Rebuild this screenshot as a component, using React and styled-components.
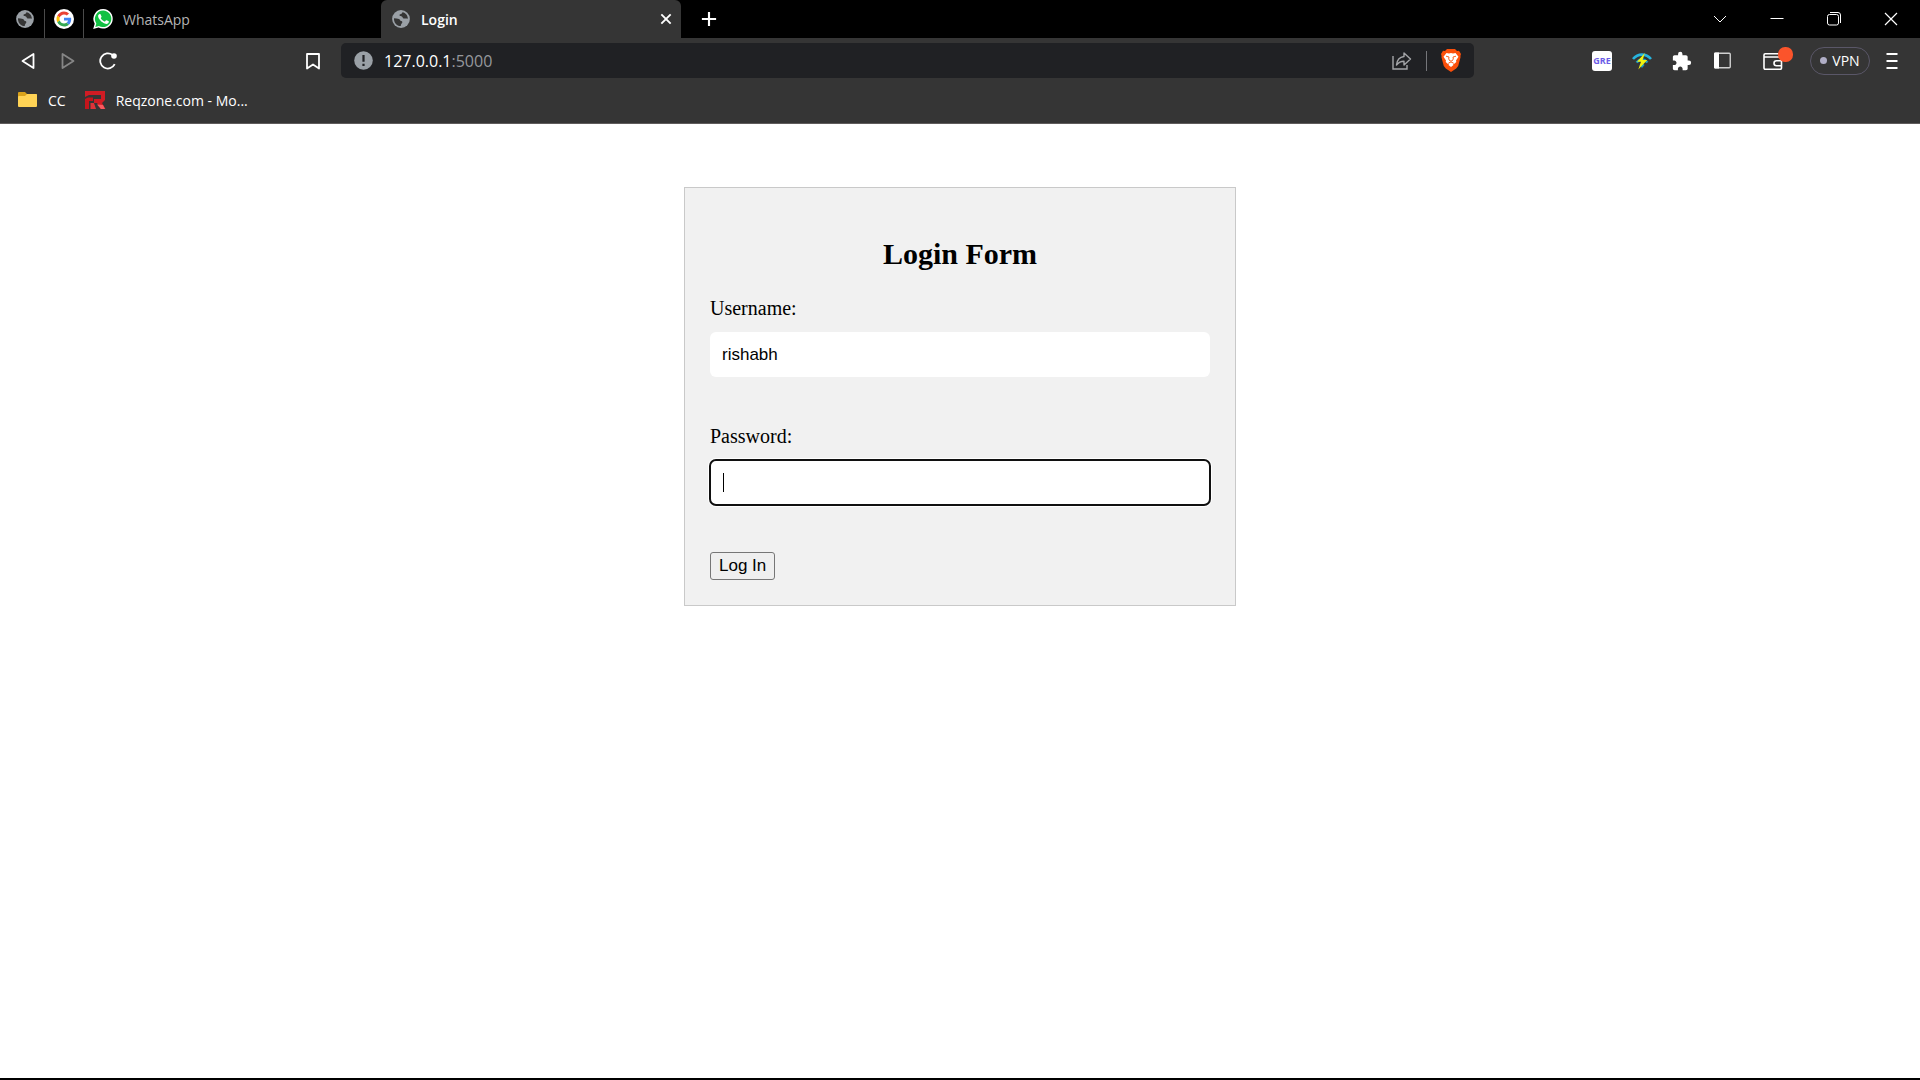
import React from "react";
import styled, { createGlobalStyle, css } from "styled-components";

const UI_FONT = '"Open Sans", "Noto Sans", sans-serif';

const GlobalStyle = createGlobalStyle`
  *, *::before, *::after { box-sizing: border-box; }
  body { margin: 0; background: #fff; }
`;

const Window = styled.div`
  display: flex;
  flex-direction: column;
  min-height: 100vh;
  border-bottom: 2px solid #000;
`;

const Chrome = styled.header`
  background: #353535;
  border-bottom: 1px solid #5f5c5c;
  font-family: ${UI_FONT};
  font-size: 14px;
  color: #fff;
`;

const iconReset = css`
  display: inline-flex;
  align-items: center;
  justify-content: center;
  padding: 0;
  border: 0;
  background: none;
  color: inherit;
  font: inherit;
`;

const TabStrip = styled.div`
  display: flex;
  height: 38px;
  background: #000;
`;

const PinnedTab = styled.button`
  ${iconReset}
  width: ${(p) => p.$width}px;
  padding-left: ${(p) => p.$inset}px;
  justify-content: flex-start;
`;

const TabDivider = styled.span`
  width: 1px;
  margin-top: 9px;
  background: #4a4a4a;
`;

const Tab = styled.div`
  display: flex;
  align-items: center;
  flex: 0 1 ${(p) => (p.$active ? 300 : 297)}px;
  padding: 0 6px 0 ${(p) => (p.$active ? 11 : 9)}px;
  border-radius: 6px 6px 0 0;
  background: ${(p) => (p.$active ? "#353535" : "transparent")};
  color: ${(p) => (p.$active ? "#fff" : "#b4b4b4")};
  font-weight: ${(p) => (p.$active ? 600 : 400)};
`;

const TabTitle = styled.button`
  ${iconReset}
  flex: 1;
  justify-content: flex-start;
  gap: ${(p) => (p.$wide ? 11 : 10)}px;
`;

const TabClose = styled.button`
  ${iconReset}
  width: 18px;
  height: 18px;
`;

const NewTab = styled.button`
  ${iconReset}
  width: 56px;
`;

const WindowControls = styled.div`
  display: flex;
  margin-left: auto;
  padding-right: 1px;
`;

const WindowButton = styled.button`
  ${iconReset}
  width: 57px;
`;

const Toolbar = styled.div`
  display: grid;
  grid-template-columns: 341px minmax(0, 1fr) 446px;
  align-items: center;
  height: 45px;
`;

const Navigation = styled.nav`
  display: flex;
  padding: 0 8px;
`;

const NavButton = styled.button`
  ${iconReset}
  width: 40px;
  height: 36px;
  color: ${(p) => (p.disabled ? "#868686" : "#fff")};
  margin-left: ${(p) => (p.$end ? "auto" : 0)};
`;

const AddressBar = styled.div`
  display: flex;
  align-items: center;
  height: 35px;
  padding: 0 13px;
  border-radius: 5px;
  background: #202124;
`;

const Address = styled.button`
  ${iconReset}
  flex: 1;
  justify-content: flex-start;
  gap: 11px;
  font-size: 16px;
`;

const Port = styled.span`
  color: #96989c;
`;

const AddressActions = styled.div`
  display: flex;
  align-items: center;
  gap: 14px;
`;

const ActionDivider = styled.span`
  width: 1px;
  height: 20px;
  background: #75767a;
`;

const ActionButton = styled.button`
  ${iconReset}
`;

const Extensions = styled.div`
  display: flex;
  align-items: center;
  justify-content: flex-end;
  padding-right: 8px;
`;

const ExtensionButton = styled.button`
  ${iconReset}
  width: 40px;
  height: 36px;
`;

const GreBadge = styled.span`
  width: 20px;
  border-radius: 3px;
  background: #fff;
  color: #6c5ce7;
  font-size: 9px;
  font-weight: 700;
  line-height: 20px;
  text-align: center;
`;

const WalletButton = styled(ExtensionButton)`
  position: relative;
  margin: 0 17px 0 11px;
`;

const WalletAlert = styled.span`
  position: absolute;
  top: 4px;
  right: 0;
  width: 15px;
  height: 15px;
  border-radius: 7px;
  background: #fb542b;
`;

const VpnButton = styled.button`
  ${iconReset}
  gap: 5px;
  width: 60px;
  height: 28px;
  margin-right: 2px;
  border: 1px solid #5a5768;
  border-radius: 14px;
`;

const VpnDot = styled.span`
  width: 7px;
  height: 7px;
  border-radius: 50%;
  background: #b0aec6;
`;

const Bookmarks = styled.nav`
  display: flex;
  align-items: flex-start;
  gap: 19px;
  height: 40px;
  padding: 6px 18px;
`;

const Bookmark = styled.a`
  display: flex;
  align-items: center;
  gap: 10px;
  height: 22px;
  color: #fff;
  text-decoration: none;
`;

const Page = styled.main`
  flex: 1;
  padding: 63px 20px;
  font-family: "Liberation Serif", serif;
  font-size: 20px;
  color: #000;
`;

const LoginForm = styled.form`
  max-width: 552px;
  margin: 0 auto;
  padding: 25px;
  border: 1px solid #c9c9c9;
  background: #f1f1f1;
`;

const Title = styled.h2`
  margin: 24px 0 26px;
  font-size: 30px;
  line-height: 33px;
  text-align: center;
`;

const Field = styled.div`
  margin-bottom: 47px;
`;

const Label = styled.label`
  display: block;
  margin-bottom: 12px;
  line-height: 24px;
`;

const InputWrap = styled.div`
  position: relative;
`;

const controlFont = css`
  font-family: "Liberation Sans", sans-serif;
  font-size: 17px;
`;

const Input = styled.input`
  ${controlFont}
  display: block;
  width: 100%;
  height: 45px;
  padding: 0 12px;
  border: 0;
  border-radius: 6px;
  background: #fff;
  color: #000;
  outline: ${(p) => (p.$focused ? "2px solid #101010" : "none")};
  outline-offset: -1px;
  box-shadow: ${(p) => (p.$focused ? "0 0 0 2px #fff" : "none")};
`;

const Caret = styled.span`
  position: absolute;
  top: 13px;
  left: 13px;
  width: 1px;
  height: 19px;
  background: #000;
`;

const Submit = styled.button`
  ${controlFont}
  display: block;
  height: 28px;
  padding: 0 8px;
  border: 1px solid #767676;
  border-radius: 3px;
  background: #efefef;
  color: #000;
`;

const Globe = () => (
  <svg width="18" height="18" viewBox="0 0 18 18">
    <circle cx="9" cy="9" r="8.9" fill="#9aa0a6" />
    <path d="M2 8.2c1.800 0 3.500.2 5 .8 1.200.5.8 1.800 2.200 2.100 1.300.3 1.500 1.300.7 2.200-.7.8-1.100 1.300-1.100 2.700C5 16.200 1.600 12.800 2 8.200Z" fill="#353535" />
    <path d="M10.600 2.200c-.8.600-.5 1.600-1.600 1.800-1.300.2-1.700.7-1.400 1.600.3.900 1.500.5 2.300.9.900.5.6 1.800 1.900 2 1.500.2 2.600-.3 4.100.3C15.800 5.300 13.600 2.700 10.600 2.200Z" fill="#353535" />
  </svg>
);

const Google = () => (
  <svg width="20" height="20" viewBox="0 0 20 20">
    <circle cx="10" cy="10" r="10" fill="#fff" />
    <g transform="translate(2.500 2.500) scale(.3125)">
      <path fill="#EA4335" d="M24 9.500c3.540 0 6.710 1.220 9.210 3.600l6.850-6.850C35.900 2.380 30.470 0 24 0 14.620 0 6.510 5.380 2.560 13.220l7.980 6.190C12.430 13.720 17.740 9.500 24 9.500z" />
      <path fill="#4285F4" d="M46.980 24.550c0-1.570-.15-3.090-.38-4.550H24v9.020h12.940c-.58 2.960-2.260 5.480-4.780 7.180l7.730 6c4.510-4.180 7.090-10.360 7.090-17.650z" />
      <path fill="#FBBC05" d="M10.530 28.590c-.48-1.450-.76-2.990-.76-4.590s.27-3.140.76-4.590l-7.980-6.190C.92 16.460 0 20.120 0 24c0 3.880.92 7.540 2.560 10.780l7.970-6.190z" />
      <path fill="#34A853" d="M24 48c6.480 0 11.930-2.130 15.890-5.810l-7.730-6c-2.150 1.450-4.920 2.300-8.160 2.300-6.260 0-11.570-4.220-13.470-9.910l-7.980 6.190C6.510 42.620 14.620 48 24 48z" />
    </g>
  </svg>
);

const WhatsApp = () => (
  <svg width="20" height="20" viewBox="0 0 20 20">
    <path d="M10.200 0A9.800 9.800 0 0 0 1.700 14.700L.2 20l5.400-1.400A9.800 9.800 0 1 0 10.200 0Z" fill="#fff" />
    <path d="M10.200 1.500A8.300 8.300 0 0 0 3.300 14.400l-1 3.500 3.600-.9A8.300 8.300 0 1 0 10.200 1.500Z" fill="#12c143" />
    <path d="M7.500 5.300c-.2-.4-.4-.4-.7-.4-.9 0-1.700 1-1.700 2.200 0 1.400 1 2.800 1.200 3 .2.200 2.200 3.400 5.400 4.500 2.500.9 3.900-.1 4.100-1.500.1-.7-.1-.8-.4-1l-1.900-.9c-.3-.1-.5-.1-.7.200l-.8 1c-.2.200-.3.200-.6.100-1.800-.8-2.800-1.900-3.600-3.200-.1-.3 0-.4.200-.6l.5-.7c.1-.2.200-.3 0-.6Z" fill="#fff" />
  </svg>
);

const Reqzone = () => (
  <svg width="21" height="18" viewBox="0 0 21 18">
    <path d="M0 0h20v9l-3 3 3.500 6h-5L12 12H9V8h7V4H4L0 6Z" fill="#d01c24" />
    <path d="M0 8l3-1.500h5V10H4v8H0Z" fill="#c4151c" />
    <path d="M5.500 12H9l2 6H5.500Z" fill="#df3339" />
    <path d="m12 13.500 4 4.500h4l-2-4Z" fill="#f75a60" />
  </svg>
);

const Folder = () => (
  <svg width="20" height="16" viewBox="0 0 20 16">
    <path d="M1 0h6l2 2h9a1 1 0 0 1 1 1v11H0V1a1 1 0 0 1 1-1Z" fill="#d9a21b" />
    <path d="M1 4h6l2-2h9a1 1 0 0 1 1 1v11a1 1 0 0 1-1 1H1a1 1 0 0 1-1-1V5a1 1 0 0 1 1-1Z" fill="#ffd355" />
  </svg>
);

const Brave = () => (
  <svg width="20" height="23" viewBox="0 0 20 23">
    <path d="M6 0h8l2 2 2-.2L20 5l-.6 2 .2 1-2.400 9-2 2.500L10 23l-5.200-3.500-2-2.500L.4 8l.2-1L0 5l2-3.200L4 2Z" fill="#fb4f0a" />
    <path d="m5.500 4 2.500.5 2-.5 2 .5 2.500-.5 3 3.800-2.500 3.700.3 1.500-2.300 2-1.300-.8.800 1.800L10 18l-2.500-2 .8-1.800-1.300.8-2.300-2 .3-1.500L2.500 7.800Z" fill="#fff" />
    <path d="m5 7.200 3 .8-.3 2 1.300 2h2l1.300-2-.3-2 3-.8M7.500 14l2.500-1 2.500 1" fill="none" stroke="#fb4f0a" strokeWidth=".9" />
  </svg>
);

const Share = () => (
  <svg width="20" height="18" viewBox="0 0 20 18" fill="none" stroke="#a4a5a8" strokeWidth="1.400">
    <path d="M1 4v13h14v-4" />
    <path d="M12 1v3.500C7.500 5 5 8 4.500 13 6.500 10.500 8.500 9.300 12 9.300V13l6.500-6Z" strokeLinejoin="round" />
  </svg>
);

const WifiBolt = () => (
  <svg width="20" height="18" viewBox="0 0 20 18" fill="none">
    <path d="M1 7C6 1.200 14 1.200 19 7" stroke="#27b4de" strokeWidth="2.600" />
    <path d="M4.500 10.500C8 6.500 12 6.500 15.500 10.500" stroke="#1c9cc4" strokeWidth="2.400" />
    <path d="M7.500 13c2-2 3.500-2 5 0L10 16Z" fill="#1c9cc4" />
    <path d="M12.800 1 5 9.800h4L6.300 17.500 15.300 8h-4.600Z" fill="#f2f20d" />
  </svg>
);

const Puzzle = () => (
  <svg width="20" height="20" viewBox="1 0 23 23" fill="#fff">
    <path d="M20.500 11H19V7c0-1.100-.9-2-2-2h-4V3.500a2.500 2.500 0 0 0-5 0V5H4c-1.100 0-1.990.9-1.990 2v3.800H3.500c1.490 0 2.700 1.210 2.700 2.700s-1.210 2.700-2.700 2.700H2V20c0 1.100.9 2 2 2h3.800v-1.500c0-1.490 1.210-2.700 2.700-2.700 1.490 0 2.700 1.210 2.700 2.700V22H17c1.100 0 2-.9 2-2v-4h1.500a2.500 2.500 0 0 0 0-5z" />
  </svg>
);

const Sidebar = () => (
  <svg width="17" height="17" viewBox="0 0 17 17">
    <rect x=".75" y="1.250" width="15.500" height="14.500" rx="1" fill="none" stroke="#d0d0d0" strokeWidth="1.400" />
    <path d="M0 1.500Q0 .5 1 .5h4v16H1q-1 0-1-1Z" fill="#fff" />
  </svg>
);

const Wallet = () => (
  <svg width="20" height="18" viewBox="0 0 20 18" fill="none" stroke="#fff" strokeWidth="1.600">
    <path d="M18.500 6.500V16a1.200 1.200 0 0 1-1.200 1.200H2.200A1.200 1.200 0 0 1 1 16V3a1.200 1.200 0 0 1 1.200-1.200H17M1 5h16.500a1 1 0 0 1 1 1" />
    <path d="M18.500 8.800H13.500a2.500 2.500 0 0 0 0 5H18.500" />
  </svg>
);

const Stroke = ({ size = 18, d, width = 1.8 }) => (
  <svg width={size} height={size} viewBox="0 0 18 18" fill="none" stroke="currentColor" strokeWidth={width} strokeLinejoin="round">
    <path d={d} />
  </svg>
);

const Info = () => (
  <svg width="19" height="19" viewBox="0 0 19 19">
    <circle cx="9.500" cy="9.500" r="9.300" fill="#9aa0a6" />
    <path d="M9.500 4v6.800M9.500 12.800v2.200" stroke="#202124" strokeWidth="2.200" />
  </svg>
);

const Reload = () => (
  <svg width="18" height="18" viewBox="0 0 18 18" fill="none" stroke="#fff" strokeWidth="1.800">
    <path d="M15.700 12.200A7.600 7.600 0 1 1 13.600 3" />
    <circle cx="15" cy="4" r="2.800" fill="#fff" stroke="none" />
  </svg>
);

export default function App() {
  return (
    <>
      <GlobalStyle />
      <Window>
        <Chrome>
          <TabStrip>
            <PinnedTab $width={44} $inset={16} aria-label="Pinned site"><Globe /></PinnedTab>
            <TabDivider />
            <PinnedTab $width={38} $inset={9} aria-label="Google"><Google /></PinnedTab>
            <TabDivider />
            <Tab><TabTitle><WhatsApp />WhatsApp</TabTitle></Tab>
            <Tab $active>
              <TabTitle $wide><Globe />Login</TabTitle>
              <TabClose aria-label="Close tab"><Stroke size={14} d="M3 3l12 12M15 3 3 15" width={2.4} /></TabClose>
            </Tab>
            <NewTab aria-label="New tab"><Stroke size={16} d="M9 1v16M1 9h16" width={2.4} /></NewTab>
            <WindowControls>
              <WindowButton aria-label="Search tabs"><Stroke d="M3 6l6 6 6-6" width={1} /></WindowButton>
              <WindowButton aria-label="Minimize"><Stroke d="M2.500 8.500h13" width={1} /></WindowButton>
              <WindowButton aria-label="Restore"><Stroke d="M4.500 4.500h7a2 2 0 0 1 2 2v6.500a2 2 0 0 1-2 2h-7a2 2 0 0 1-2-2V6.500a2 2 0 0 1 2-2ZM5 2.500h8a2.500 2.500 0 0 1 2.500 2.500V13" width={1} /></WindowButton>
              <WindowButton aria-label="Close"><Stroke d="M3 3l12 12M15 3 3 15" width={1.2} /></WindowButton>
            </WindowControls>
          </TabStrip>

          <Toolbar>
            <Navigation>
              <NavButton aria-label="Back"><Stroke d="M14.500 2v14L3.500 9Z" /></NavButton>
              <NavButton aria-label="Forward" disabled><Stroke d="M3.500 2v14l11-7Z" /></NavButton>
              <NavButton aria-label="Reload"><Reload /></NavButton>
              <NavButton aria-label="Bookmark this tab" $end><Stroke d="M3 2h12v14.500l-6-4-6 4Z" /></NavButton>
            </Navigation>
            <AddressBar>
              <Address aria-label="Address"><Info /><span>127.0.0.1<Port>:5000</Port></span></Address>
              <AddressActions>
                <ActionButton aria-label="Share"><Share /></ActionButton>
                <ActionDivider />
                <ActionButton aria-label="Brave Shields"><Brave /></ActionButton>
              </AddressActions>
            </AddressBar>
            <Extensions>
              <ExtensionButton><GreBadge>GRE</GreBadge></ExtensionButton>
              <ExtensionButton aria-label="Network"><WifiBolt /></ExtensionButton>
              <ExtensionButton aria-label="Extensions"><Puzzle /></ExtensionButton>
              <ExtensionButton aria-label="Sidebar"><Sidebar /></ExtensionButton>
              <WalletButton aria-label="Wallet"><Wallet /><WalletAlert /></WalletButton>
              <VpnButton><VpnDot />VPN</VpnButton>
              <ExtensionButton aria-label="Menu"><Stroke d="M3.500 2h11M3.500 9h11M3.500 16h11" /></ExtensionButton>
            </Extensions>
          </Toolbar>

          <Bookmarks>
            <Bookmark href="#cc"><Folder />CC</Bookmark>
            <Bookmark href="#reqzone"><Reqzone />Reqzone.com - Mo...</Bookmark>
          </Bookmarks>
        </Chrome>

        <Page>
          <LoginForm>
            <Title>Login Form</Title>
            <Field>
              <Label htmlFor="username">Username:</Label>
              <Input id="username" type="text" defaultValue="rishabh" />
            </Field>
            <Field>
              <Label htmlFor="password">Password:</Label>
              <InputWrap>
                <Input id="password" type="password" $focused />
                <Caret />
              </InputWrap>
            </Field>
            <Submit type="button">Log In</Submit>
          </LoginForm>
        </Page>
      </Window>
    </>
  );
}
